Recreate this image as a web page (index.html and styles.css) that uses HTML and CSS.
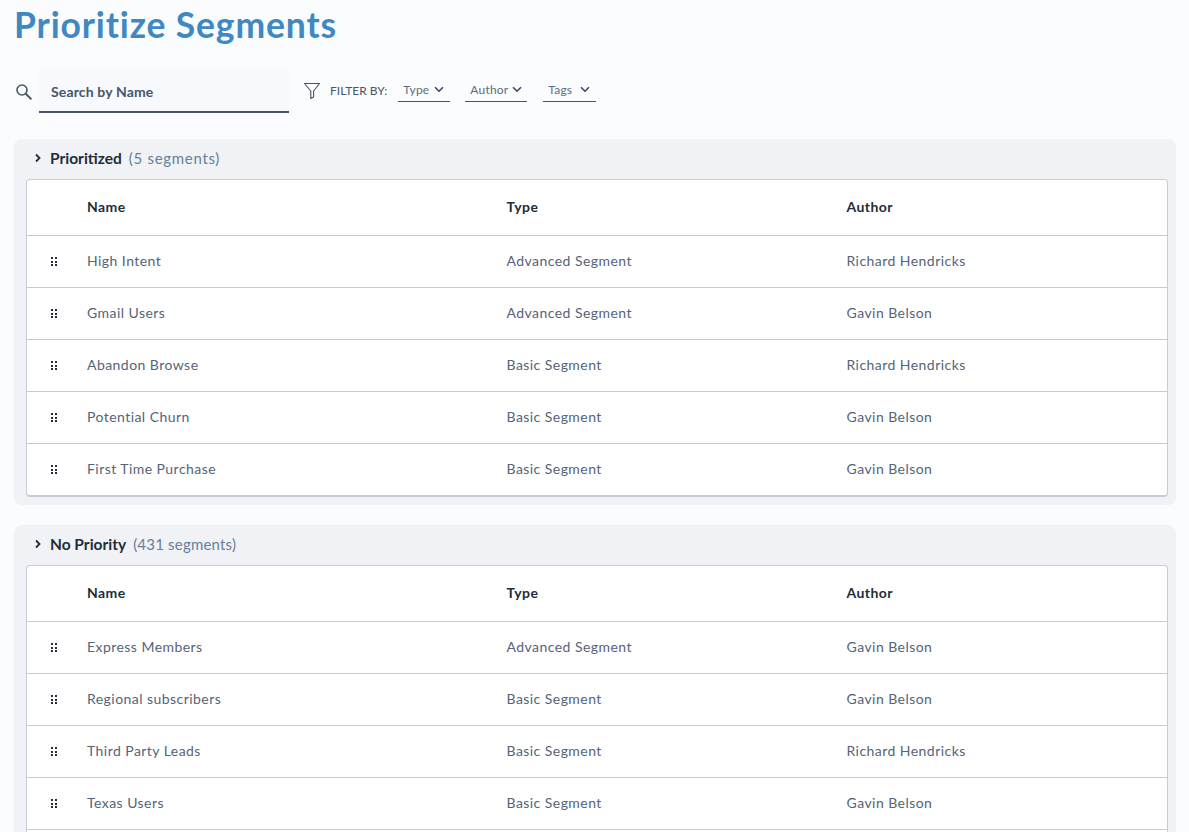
FILE: index.html
```html
<!DOCTYPE html>
<html lang="en">
<head>
    <meta charset="UTF-8">
    <title>Prioritize Segments</title>
    <link rel="stylesheet" href="styles.css">
</head>
<body>
<div class="page">
    <h1 class="page-title">Prioritize Segments</h1>

    <div class="toolbar">
        <svg class="search-icon" width="18" height="18" viewBox="0 0 18 18"><circle cx="7" cy="7" r="5" fill="none" stroke="#47566b" stroke-width="1.6"/><path d="M10.8 10.8L16.4 16.4" stroke="#47566b" stroke-width="2" fill="none"/></svg>
        <div class="search-box">Search by Name</div>
        <svg class="filter-icon" width="18" height="18" viewBox="0 0 18 18"><path d="M1.5 1.5H16.5L10.6 9V15L7.8 16.6V9Z" fill="none" stroke="#47566b" stroke-width="1.1" stroke-linejoin="round"/></svg>
        <span class="filter-label">FILTER BY:</span>
        <div class="filter-select type">Type <svg width="10" height="7" viewBox="0 0 10 7"><path d="M1 1.2L5 5.2L9 1.2" fill="none" stroke="#2f4a6d" stroke-width="1.6"/></svg></div>
        <div class="filter-select author">Author <svg width="10" height="7" viewBox="0 0 10 7"><path d="M1 1.2L5 5.2L9 1.2" fill="none" stroke="#2f4a6d" stroke-width="1.6"/></svg></div>
        <div class="filter-select tags">Tags <svg width="10" height="7" viewBox="0 0 10 7"><path d="M1 1.2L5 5.2L9 1.2" fill="none" stroke="#2f4a6d" stroke-width="1.6"/></svg></div>
    </div>

    <section class="group">
        <div class="group-header">
            <svg class="caret" width="8" height="10" viewBox="0 0 8 10"><path d="M2 1.5L5.5 5L2 8.5" fill="none" stroke="#222d3a" stroke-width="1.8"/></svg>
            <span class="group-name">Prioritized</span>
            <span class="group-count wide">(5 segments)</span>
        </div>
        <div class="seg-table">
            <div class="seg-row seg-head"><span></span><span>Name</span><span>Type</span><span>Author</span></div>
            <div class="seg-row"><span class="handle"><i></i><i></i><i></i><i></i><i></i><i></i></span><span>High Intent</span><span>Advanced Segment</span><span>Richard Hendricks</span></div>
            <div class="seg-row"><span class="handle"><i></i><i></i><i></i><i></i><i></i><i></i></span><span>Gmail Users</span><span>Advanced Segment</span><span>Gavin Belson</span></div>
            <div class="seg-row"><span class="handle"><i></i><i></i><i></i><i></i><i></i><i></i></span><span>Abandon Browse</span><span>Basic Segment</span><span>Richard Hendricks</span></div>
            <div class="seg-row"><span class="handle"><i></i><i></i><i></i><i></i><i></i><i></i></span><span>Potential Churn</span><span>Basic Segment</span><span>Gavin Belson</span></div>
            <div class="seg-row"><span class="handle"><i></i><i></i><i></i><i></i><i></i><i></i></span><span>First Time Purchase</span><span>Basic Segment</span><span>Gavin Belson</span></div>
        </div>
    </section>

    <section class="group">
        <div class="group-header">
            <svg class="caret" width="8" height="10" viewBox="0 0 8 10"><path d="M2 1.5L5.5 5L2 8.5" fill="none" stroke="#222d3a" stroke-width="1.8"/></svg>
            <span class="group-name">No Priority</span>
            <span class="group-count">(431 segments)</span>
        </div>
        <div class="seg-table">
            <div class="seg-row seg-head"><span></span><span>Name</span><span>Type</span><span>Author</span></div>
            <div class="seg-row"><span class="handle"><i></i><i></i><i></i><i></i><i></i><i></i></span><span>Express Members</span><span>Advanced Segment</span><span>Gavin Belson</span></div>
            <div class="seg-row"><span class="handle"><i></i><i></i><i></i><i></i><i></i><i></i></span><span>Regional subscribers</span><span>Basic Segment</span><span>Gavin Belson</span></div>
            <div class="seg-row"><span class="handle"><i></i><i></i><i></i><i></i><i></i><i></i></span><span>Third Party Leads</span><span>Basic Segment</span><span>Richard Hendricks</span></div>
            <div class="seg-row"><span class="handle"><i></i><i></i><i></i><i></i><i></i><i></i></span><span>Texas Users</span><span>Basic Segment</span><span>Gavin Belson</span></div>
            <div class="seg-row"></div>
        </div>
    </section>
</div>
</body>
</html>
```

FILE: styles.css
```css
html, body {
    margin: 0;
    height: 832px;
    overflow: hidden;
}
body {
    background-color: #fbfcfe;
    font-family: "Lato", "Liberation Sans", sans-serif;
    color: #47566b;
}
.page {
    padding: 0 13px 0 14px;
}
.page-title {
    margin: 0;
    height: 69px;
    line-height: 49px;
    font-size: 35.5px;
    font-weight: 700;
    letter-spacing: .85px;
    color: #3f88c2;
}
.toolbar {
    display: flex;
    align-items: flex-start;
    height: 70px;
}
.search-icon {
    margin: 14px 6px 0 1px;
}
.search-box {
    box-sizing: border-box;
    width: 250px;
    height: 44px;
    padding: 14px 12px 0;
    font-size: 14px;
    font-weight: 700;
    letter-spacing: .15px;
    background-color: #f7f9fc;
    border-bottom: 2px solid #47566b;
}
.filter-icon {
    margin: 13px 9px 0 14px;
}
.filter-label {
    margin: 15px 11px 0 0;
    font-size: 12px;
    line-height: 14px;
}
.filter-select {
    display: flex;
    justify-content: space-between;
    align-items: center;
    box-sizing: border-box;
    height: 22px;
    margin: 11px 15px 0 0;
    padding: 0 6px 3px 5px;
    font-size: 12px;
    letter-spacing: .2px;
    color: #5b6b80;
    border-bottom: 1px solid #47566b;
}
.filter-select.type { width: 52px; }
.filter-select.author { width: 62px; margin-right: 16px; padding-right: 5px; }
.filter-select.tags { width: 53px; }
.group {
    margin-bottom: 20px;
    padding: 0 8px 8px 12px;
    background-color: #f0f2f6;
    border-radius: 8px;
}
.group-header {
    display: flex;
    align-items: center;
    box-sizing: border-box;
    height: 40px;
    margin-left: 8px;
    padding-bottom: 2px;
}
.caret {
    margin-right: 8px;
}
.group-name {
    margin-right: 7px;
    font-size: 15.5px;
    font-weight: 700;
    color: #222d3a;
}
.group-count {
    font-size: 15px;
    letter-spacing: .2px;
    color: #64809c;
}
.group-count.wide {
    letter-spacing: .7px;
}
.seg-table {
    background-color: #fff;
    border: 1px solid #c5cbd8;
    border-bottom-width: 2px;
    border-radius: 4px;
}
.seg-row {
    display: grid;
    grid-template-columns: 60px 419.5px 340px 1fr;
    align-items: center;
    box-sizing: border-box;
    height: 52px;
    padding-bottom: 2px;
    font-size: 14px;
    letter-spacing: .45px;
    color: #546478;
    border-bottom: 1px solid #c5cbd8;
}
.seg-row:last-child {
    height: 51px;
    border-bottom: 0;
}
.seg-head {
    height: 56px;
    font-weight: 700;
    color: #222d3a;
}
.handle {
    display: grid;
    grid-template-columns: 2px 2px;
    gap: 1.5px 2px;
    justify-self: start;
    margin: 2px 0 0 24px;
}
.handle i {
    width: 2px;
    height: 2px;
    background-color: #222d3a;
}
```
